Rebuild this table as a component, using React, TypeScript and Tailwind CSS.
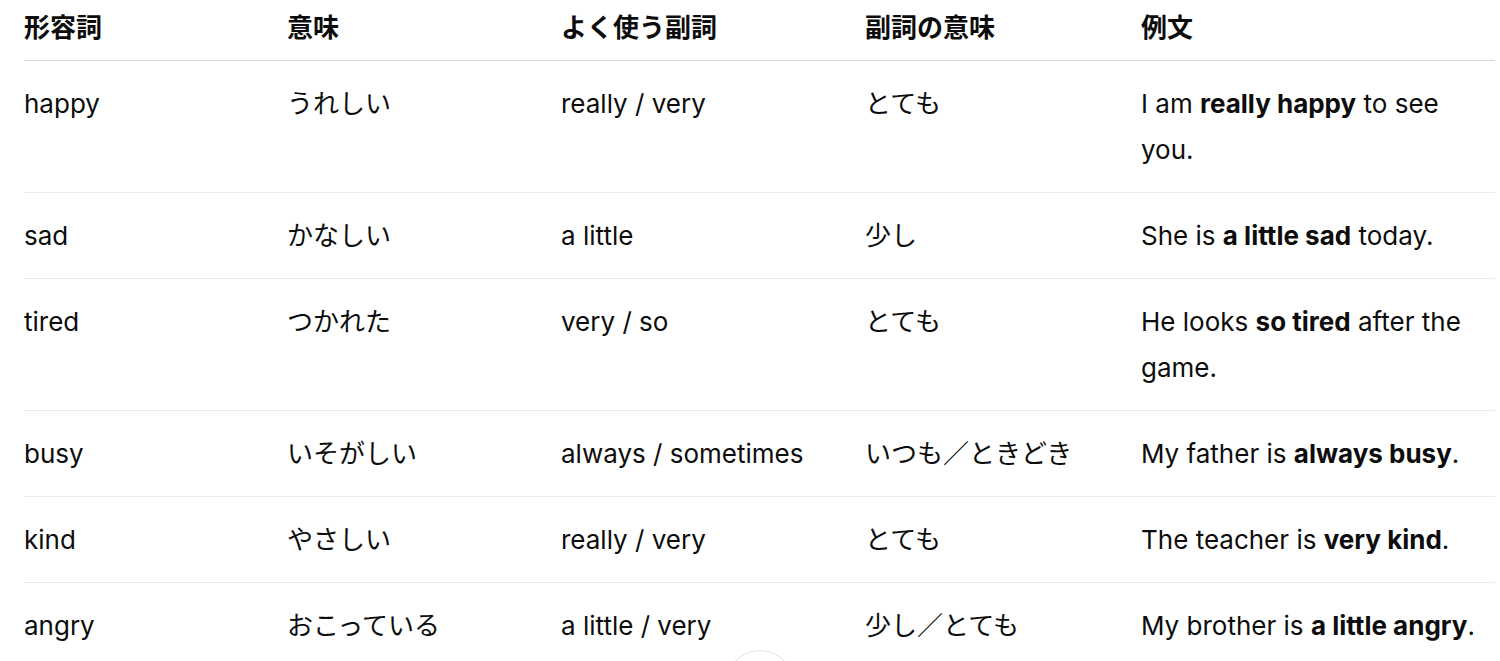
import React from "react";

type Row = {
  adj: string;
  mean: string;
  adv: string;
  advMean: string;
  ex: React.ReactNode;
};

const rows: Row[] = [
  {
    adj: "happy",
    mean: "うれしい",
    adv: "really / very",
    advMean: "とても",
    ex: (
      <>
        I am <b className="font-bold">really happy</b> to see you.
      </>
    ),
  },
  {
    adj: "sad",
    mean: "かなしい",
    adv: "a little",
    advMean: "少し",
    ex: (
      <>
        She is <b className="font-bold">a little sad</b> today.
      </>
    ),
  },
  {
    adj: "tired",
    mean: "つかれた",
    adv: "very / so",
    advMean: "とても",
    ex: (
      <>
        He looks <b className="font-bold">so tired</b> after the game.
      </>
    ),
  },
  {
    adj: "busy",
    mean: "いそがしい",
    adv: "always / sometimes",
    advMean: "いつも／ときどき",
    ex: (
      <>
        My father is <b className="font-bold">always busy</b>.
      </>
    ),
  },
  {
    adj: "kind",
    mean: "やさしい",
    adv: "really / very",
    advMean: "とても",
    ex: (
      <>
        The teacher is <b className="font-bold">very kind</b>.
      </>
    ),
  },
  {
    adj: "angry",
    mean: "おこっている",
    adv: "a little / very",
    advMean: "少し／とても",
    ex: (
      <>
        My brother is <b className="font-bold">a little angry</b>.
      </>
    ),
  },
];

const cols = "grid grid-cols-[263px_274px_304px_276px_1fr]";

export default function App() {
  return (
    <div
      className="relative h-[661px] overflow-hidden bg-white text-[#0d0d0d]"
      style={{ fontFamily: '"Inter", "Noto Sans CJK JP", sans-serif' }}
    >
      <div className="pl-[24px] pr-[5px] text-[26px] leading-[46px]">
        <div className={`${cols} border-b border-[#d6d6d6] pt-[5px] pb-[9px] font-bold`}>
          <div>形容詞</div>
          <div>意味</div>
          <div>よく使う副詞</div>
          <div>副詞の意味</div>
          <div>例文</div>
        </div>
        {rows.map((r, i) => (
          <div
            key={i}
            className={`${cols} border-b border-[#ececec] pt-[20px] pb-[19px]`}
          >
            <div>{r.adj}</div>
            <div>{r.mean}</div>
            <div>{r.adv}</div>
            <div>{r.advMean}</div>
            <div className="pr-[20px]">{r.ex}</div>
          </div>
        ))}
      </div>
      <div className="absolute left-[726px] top-[650px] h-[68px] w-[68px] rounded-full border border-[#e3e3e3] bg-white" />
    </div>
  );
}
